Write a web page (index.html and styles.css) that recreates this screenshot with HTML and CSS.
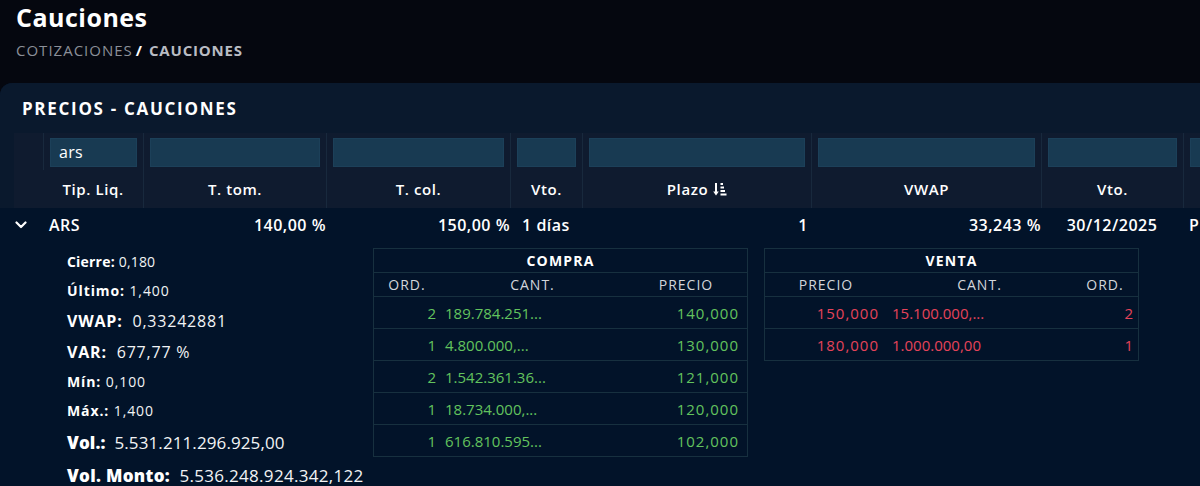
FILE: index.html
```html
<!DOCTYPE html>
<html lang="es">
<head>
<meta charset="utf-8">
<title>Cauciones</title>
<link rel="stylesheet" href="styles.css">
</head>
<body>
<header class="page-head">
  <h1 class="page-title">Cauciones</h1>
  <nav class="crumbs"><span class="crumb-link">COTIZACIONES</span><span class="crumb-sep">/</span><span class="crumb-current">CAUCIONES</span></nav>
</header>

<section class="panel">
  <div class="panel-top">
    <h2 class="panel-title">PRECIOS - CAUCIONES</h2>
    <div class="grid-head">
      <div class="row filter-row">
        <div class="cell cell-exp"></div>
        <div class="cell"><div class="filter">ars</div></div>
        <div class="cell"><div class="filter"></div></div>
        <div class="cell"><div class="filter"></div></div>
        <div class="cell"><div class="filter"></div></div>
        <div class="cell"><div class="filter"></div></div>
        <div class="cell"><div class="filter"></div></div>
        <div class="cell"><div class="filter"></div></div>
        <div class="cell"><div class="filter"></div></div>
      </div>
      <div class="row label-row">
        <div class="cell cell-exp"></div>
        <div class="cell">Tip. Liq.</div>
        <div class="cell">T. tom.</div>
        <div class="cell">T. col.</div>
        <div class="cell">Vto.</div>
        <div class="cell">Plazo <svg class="sort-icon" viewBox="0 0 14 14" width="14" height="14"><path d="M3 1v10.5" stroke="#fff" stroke-width="2" fill="none"/><path d="M0.2 9.5L3 13.4 5.8 9.5z" fill="#fff"/><rect x="7.5" y="1" width="2.5" height="2" fill="#fff"/><rect x="7.5" y="4.5" width="3.5" height="2" fill="#fff"/><rect x="7.5" y="8" width="4.5" height="2" fill="#fff"/><rect x="7.5" y="11.5" width="6" height="2" fill="#fff"/></svg></div>
        <div class="cell">VWAP</div>
        <div class="cell">Vto.</div>
        <div class="cell"></div>
      </div>
    </div>
  </div>

  <div class="panel-body">
    <div class="row data-row">
      <div class="cell cell-exp"><svg class="chev" viewBox="0 0 12 8" width="12" height="8"><path d="M1.5 1.5L6 6l4.5-4.5" stroke="#fff" stroke-width="2.2" fill="none" stroke-linecap="round" stroke-linejoin="round"/></svg></div>
      <div class="cell left">ARS</div>
      <div class="cell right flush">140,00 %</div>
      <div class="cell right flush">150,00 %</div>
      <div class="cell center">1 días</div>
      <div class="cell right">1</div>
      <div class="cell right flush">33,243 %</div>
      <div class="cell center">30/12/2025</div>
      <div class="cell left">P</div>
    </div>

    <div class="details">
      <ul class="stats">
        <li class="stat s1"><b>Cierre:</b> 0,180</li>
        <li class="stat s2"><b>Último:</b> 1,400</li>
        <li class="stat stat-md s3"><b>VWAP:</b>&nbsp; 0,33242881</li>
        <li class="stat stat-md s4"><b>VAR:</b>&nbsp; 677,77 %</li>
        <li class="stat s5"><b>Mín:</b> 0,100</li>
        <li class="stat s6"><b>Máx.:</b> 1,400</li>
        <li class="stat stat-lg s7"><b>Vol.:</b>&nbsp; 5.531.211.296.925,00</li>
        <li class="stat stat-lg s8"><b>Vol. Monto:</b>&nbsp; 5.536.248.924.342,122</li>
      </ul>

      <table class="book buy">
        <colgroup><col class="c-ord"><col class="c-cant"><col class="c-price"></colgroup>
        <thead>
          <tr class="book-title"><th colspan="3">COMPRA</th></tr>
          <tr class="book-cols"><th>ORD.</th><th>CANT.</th><th>PRECIO</th></tr>
        </thead>
        <tbody>
          <tr><td class="ord">2</td><td class="cant">189.784.251...</td><td class="price">140,000</td></tr>
          <tr><td class="ord">1</td><td class="cant">4.800.000,...</td><td class="price">130,000</td></tr>
          <tr><td class="ord">2</td><td class="cant">1.542.361.36...</td><td class="price">121,000</td></tr>
          <tr><td class="ord">1</td><td class="cant">18.734.000,...</td><td class="price">120,000</td></tr>
          <tr><td class="ord">1</td><td class="cant">616.810.595...</td><td class="price">102,000</td></tr>
        </tbody>
      </table>

      <table class="book sell">
        <colgroup><col class="c-price"><col class="c-cant"><col class="c-ord"></colgroup>
        <thead>
          <tr class="book-title"><th colspan="3">VENTA</th></tr>
          <tr class="book-cols"><th>PRECIO</th><th>CANT.</th><th>ORD.</th></tr>
        </thead>
        <tbody>
          <tr><td class="price">150,000</td><td class="cant">15.100.000,...</td><td class="ord">2</td></tr>
          <tr><td class="price">180,000</td><td class="cant">1.000.000,00</td><td class="ord">1</td></tr>
        </tbody>
      </table>
    </div>
  </div>
</section>
</body>
</html>
```

FILE: styles.css
```css
* { box-sizing: border-box; }

html, body {
  margin: 0;
  padding: 0;
  background: #05070f;
  color: #ffffff;
  font-family: "Open Sans", "DejaVu Sans", sans-serif;
  overflow: hidden;
}

.page-head {
  padding: 2px 16px 0;
  height: 83px;
}

.page-title {
  margin: 0;
  font-size: 25px;
  line-height: 30px;
  font-weight: 700;
  letter-spacing: 0.5px;
}

.crumbs {
  margin-top: 8px;
  font-size: 15px;
  line-height: 20px;
}

.crumb-link { color: #8b8f98; letter-spacing: 1px; }
.crumb-sep { color: #ffffff; font-weight: 700; margin: 0 7px 0 3px; }
.crumb-current { color: #b9bcc3; font-weight: 700; letter-spacing: 0.8px; }

.panel {
  width: 1220px;
  border-radius: 12px 0 0 0;
  overflow: hidden;
  background: #021329;
  height: 420px;
}

.panel-top {
  background: #0a192d;
  padding: 16px 0 0 14px;
}

.panel-title {
  margin: 0 0 14px 8px;
  font-size: 17px;
  line-height: 20px;
  font-weight: 700;
  letter-spacing: 1.7px;
}

.grid-head {
  background: #0f1b2f;
}

.row {
  display: grid;
  grid-template-columns: 29px 100px 183px 184px 72px 229px 230px 142px 200px;
}

.filter-row { height: 37px; }
.filter-row .cell { border-left: 1px solid #18293d; padding: 5px 6px 0; }
.filter-row .cell-exp { border-left: 0; }

.filter {
  height: 29px;
  background: #183a52;
  border: 1px solid #1c4059;
  font-size: 16px;
  line-height: 26px;
  padding-left: 8px;
  color: #ffffff;
  letter-spacing: 0.3px;
}

.label-row { height: 38px; }
.label-row .cell {
  border-left: 1px solid #18293d;
  display: flex;
  align-items: center;
  justify-content: center;
  font-size: 15px;
  font-weight: 600;
  letter-spacing: 0.6px;
  gap: 5px;
}
.label-row .cell-exp { border-left: 0; }
.label-row .cell:nth-child(2) { border-left: 0; }

.sort-icon { display: block; }

.data-row {
  height: 34px;
  margin-left: 14px;
  font-size: 16px;
  font-weight: 600;
  letter-spacing: 0.5px;
  align-items: center;
}

.data-row .cell { padding: 0 3px; white-space: nowrap; }
.data-row .left { text-align: left; padding-left: 6px; }
.data-row .right { text-align: right; }
.data-row .flush { padding-right: 0; }
.data-row .center { text-align: center; }
.data-row .cell-exp { padding: 0 0 0 1px; display: flex; align-items: center; }
.chev { display: block; }

.details {
  display: flex;
  align-items: flex-start;
  padding: 6px 0 0 67px;
}

.stats {
  list-style: none;
  margin: 0;
  padding: 0;
  width: 306px;
  flex: none;
}

.stat {
  font-size: 14px;
  letter-spacing: 0.5px;
  height: 29px;
  line-height: 29px;
  white-space: nowrap;
  color: #f2f3f5;
}
.stat b { font-weight: 700; color: #ffffff; }
.stat-md { font-size: 16px; letter-spacing: 0.8px; }
.stat-lg { font-size: 17px; letter-spacing: 0.1px; }
.stat-lg b { font-weight: 800; }

.s1 { height: 28px; line-height: 28px; letter-spacing: 0.2px; }
.s2 { height: 29px; line-height: 29px; letter-spacing: 0.9px; }
.s3 { height: 32px; line-height: 32px; }
.s4 { height: 31px; line-height: 31px; }
.s5 { height: 28px; line-height: 28px; letter-spacing: 0.9px; }
.s6 { height: 30px; line-height: 30px; letter-spacing: 0.9px; }
.s7 { height: 34px; line-height: 34px; }
.s8 { height: 32px; line-height: 32px; letter-spacing: 0.3px; }

.book {
  border-collapse: collapse;
  table-layout: fixed;
  width: 374px;
  flex: none;
}
.book.sell { margin-left: 16px; }

.c-ord { width: 67px; }
.c-cant { width: 184px; }
.c-price { width: 123px; }

.book th, .book td {
  border: 1px solid #17303f;
  padding: 0;
  white-space: nowrap;
}

.book-title th {
  height: 24px;
  font-size: 14px;
  font-weight: 700;
  letter-spacing: 1.2px;
  text-align: center;
}

.book-cols th {
  height: 24px;
  font-size: 14px;
  font-weight: 400;
  letter-spacing: 1px;
  color: #d3d6db;
  text-align: center;
  border-left-color: transparent;
  border-right-color: transparent;
}
.book-cols th:first-child { border-left-color: #17303f; }
.book-cols th:last-child { border-right-color: #17303f; }

.book td {
  height: 32px;
  font-size: 15px;
  letter-spacing: 1px;
  border-left-color: transparent;
  border-right-color: transparent;
}
.book td:first-child { border-left-color: #17303f; }
.book td:last-child { border-right-color: #17303f; }

.buy td { color: #62c35e; }
.sell td { color: #e5435a; }

.book .ord { text-align: right; padding-right: 3px; }
.book .cant { text-align: left; padding-left: 4px; letter-spacing: 0; }
.book .price { text-align: right; padding-right: 8px; }
.sell .ord { padding-right: 4px; }
```
